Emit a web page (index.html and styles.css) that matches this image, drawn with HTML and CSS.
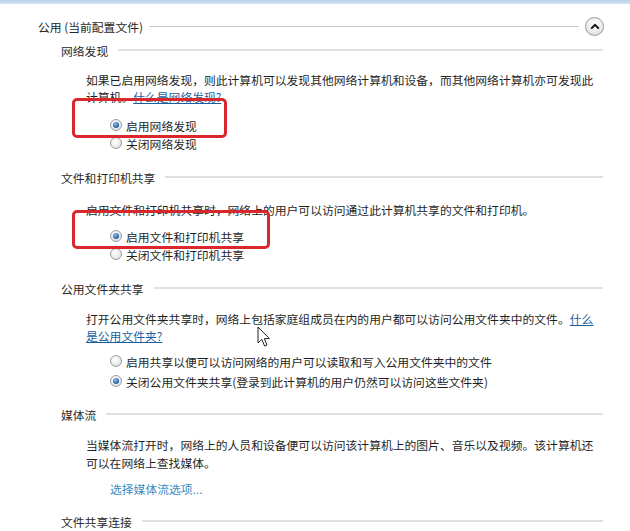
FILE: index.html
```html
<!DOCTYPE html>
<html lang="zh-CN">
<head>
<meta charset="utf-8">
<title>高级共享设置</title>
<link rel="stylesheet" href="styles.css">
</head>
<body>
<div class="topbar"></div>
<div class="page">
  <div class="group-head">
    <span class="group-title">公用 (当前配置文件)</span>
    <span class="group-line"></span>
    <span class="collapse">
      <svg width="10" height="7" viewBox="0 0 10 7"><path d="M1.2 5.6 L5 1.8 L8.8 5.6" fill="none" stroke="#111" stroke-width="2"/></svg>
    </span>
  </div>

  <section class="sec sec-1">
    <div class="sub-head"><span>网络发现</span><span class="sub-line"></span></div>
    <p class="desc desc-1">如果已启用网络发现，则此计算机可以发现其他网络计算机和设备，而其他网络计算机亦可发现此计算机。<a class="link">什么是网络发现?</a></p>
    <div class="options opts-1">
      <label class="opt"><span class="radio checked"></span>启用网络发现</label>
      <label class="opt"><span class="radio"></span>关闭网络发现</label>
      <span class="mark mark-1"></span>
    </div>
  </section>

  <section class="sec sec-2">
    <div class="sub-head"><span>文件和打印机共享</span><span class="sub-line"></span></div>
    <p class="desc desc-2">启用文件和打印机共享时，网络上的用户可以访问通过此计算机共享的文件和打印机。</p>
    <div class="options opts-2">
      <label class="opt"><span class="radio checked"></span>启用文件和打印机共享</label>
      <label class="opt"><span class="radio"></span>关闭文件和打印机共享</label>
      <span class="mark mark-2"></span>
    </div>
  </section>

  <section class="sec sec-3">
    <div class="sub-head"><span>公用文件夹共享</span><span class="sub-line"></span></div>
    <p class="desc desc-3">打开公用文件夹共享时，网络上包括家庭组成员在内的用户都可以访问公用文件夹中的文件。<a class="link">什么是公用文件夹?</a></p>
    <div class="options opts-3">
      <label class="opt"><span class="radio"></span>启用共享以便可以访问网络的用户可以读取和写入公用文件夹中的文件</label>
      <label class="opt"><span class="radio checked"></span>关闭公用文件夹共享(登录到此计算机的用户仍然可以访问这些文件夹)</label>
    </div>
  </section>

  <section class="sec sec-4">
    <div class="sub-head"><span>媒体流</span><span class="sub-line"></span></div>
    <p class="desc desc-4">当媒体流打开时，网络上的人员和设备便可以访问该计算机上的图片、音乐以及视频。该计算机还可以在网络上查找媒体。</p>
    <a class="media-link">选择媒体流选项...</a>
  </section>

  <section class="sec sec-5">
    <div class="sub-head"><span>文件共享连接</span><span class="sub-line"></span></div>
  </section>
</div>

<svg class="cursor" width="14" height="22" viewBox="0 0 14 22">
  <path d="M1 1 L1 17 L4.8 13.4 L7.6 20 L10 19 L7.3 12.6 L12.4 12.6 Z" fill="#fff" stroke="#222" stroke-width="1" stroke-linejoin="round"/>
</svg>
</body>
</html>
```

FILE: styles.css
```css
* { box-sizing: border-box; }

html, body {
  margin: 0;
  padding: 0;
  background: #ffffff;
}

body {
  width: 630px;
  height: 531px;
  overflow: hidden;
  position: relative;
  font-family: "Noto Sans CJK SC", "Microsoft YaHei", sans-serif;
  font-size: 11.8px;
  color: #1f1f1f;
}

.topbar {
  height: 4px;
  background: linear-gradient(#b9d0ea, #d3e2f3);
}

.page {
  padding: 0 27px 0 38px;
}

/* group header */
.group-head {
  margin-top: 12px;
  height: 20px;
  display: flex;
  align-items: center;
}

.group-title {
  color: #262626;
  white-space: nowrap;
}

.group-line {
  flex: 1;
  height: 1px;
  background: #c9c9c9;
  margin: 0 6px 0 6px;
}

.collapse {
  width: 19px;
  height: 19px;
  border-radius: 50%;
  border: 1px solid #9a9a9a;
  background: radial-gradient(circle at 50% 35%, #ffffff 0%, #ececec 55%, #d2d2d2 100%);
  display: flex;
  align-items: center;
  justify-content: center;
  margin-right: -1px;
}

/* sections */
.sec { margin-top: 16px; }
.sec-1 { margin-top: 5px; }
.sec-4, .sec-5 { margin-top: 14px; }

.sub-head {
  margin-left: 23px;
  height: 18px;
  display: flex;
  align-items: center;
  color: #2a2a2a;
}

.sub-line {
  flex: 1;
  height: 2px;
  background: #e1e1e1;
  margin-left: 10px;
}

.desc {
  margin: 13px 0 0 48px;
  width: 512px;
  line-height: 17px;
}
.desc-1 { margin-top: 12px; }
.desc-2 { margin-top: 15px; }
.desc-4 { line-height: 18px; }

.link {
  color: #1c5f9e;
  text-decoration: underline;
}

.media-link {
  display: block;
  margin: 8px 0 0 72px;
  line-height: 18px;
  color: #3a8cc2;
}

/* radio options */
.options {
  position: relative;
  margin: 9px 0 0 48px;
}
.opts-1 { margin-top: 11px; }
.opts-3 { margin-top: 7px; }

.opt {
  display: flex;
  align-items: center;
  height: 18px;
  padding-left: 24px;
  white-space: nowrap;
}
.opts-3 .opt { height: 20px; }

.radio {
  width: 12px;
  height: 12px;
  border-radius: 50%;
  border: 1px solid #9c9c9c;
  background: radial-gradient(circle at 40% 35%, #ffffff 0%, #eeeeee 50%, #d4d4d4 100%);
  margin-right: 4px;
  flex: none;
  display: flex;
  align-items: center;
  justify-content: center;
}

.radio.checked::after {
  content: "";
  width: 6px;
  height: 6px;
  border-radius: 50%;
  background: radial-gradient(circle at 40% 35%, #8ec3f0 0%, #2f6fb4 55%, #123f78 100%);
}

/* red annotation boxes */
.mark {
  position: absolute;
  left: -14px;
  border: 3px solid #d9272b;
  border-radius: 5px;
  pointer-events: none;
}
.mark-1 { top: -18px; width: 155px; height: 40px; }
.mark-2 { top: -17px; width: 198px; height: 39px; }

/* mouse pointer */
.cursor {
  position: absolute;
  left: 257px;
  top: 326px;
}
```
